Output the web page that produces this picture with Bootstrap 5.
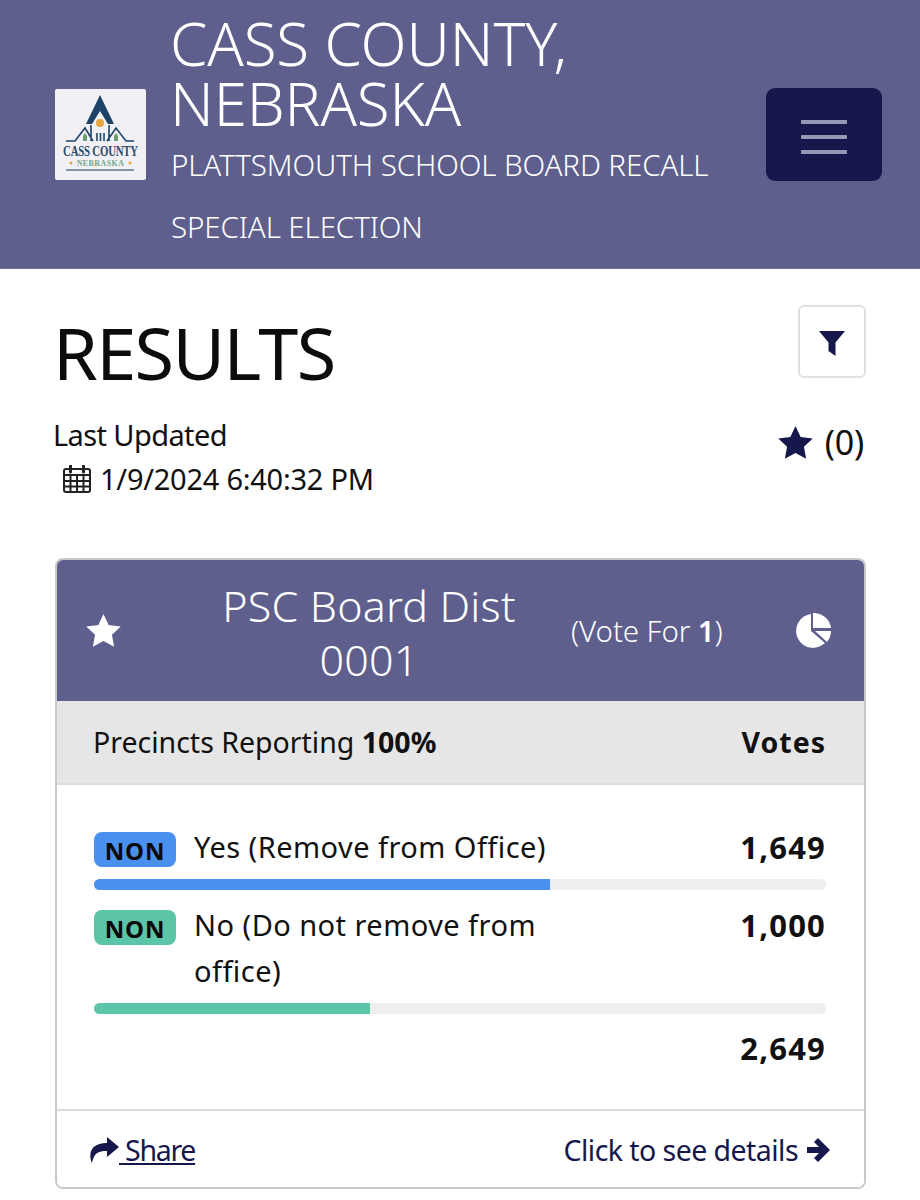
<!DOCTYPE html>
<html lang="en">
<head>
<meta charset="utf-8">
<title>Results</title>
<link href="https://cdn.jsdelivr.net/npm/bootstrap@5.3.0/dist/css/bootstrap.min.css" rel="stylesheet">
<style>
body{font-family:"Noto Sans","Open Sans",sans-serif;color:#111;background:#fff;font-size:29px;letter-spacing:-.2px}
.topbar{background:#5e5f8d;border-bottom:1px solid #77778f;height:269px;padding:0 38px 0 55px;color:#fff}
.logo-box{width:91px;height:91px;flex:none;background:#f1f1f5;border-radius:2px}
.brand-wrap{margin-left:24px;width:570px;flex:none}
.brand-title{font-size:60px;line-height:60px;font-weight:300;margin:3px 0 1px;letter-spacing:-.1px}
.brand-sub{font-size:29.5px;line-height:62px;font-weight:300;letter-spacing:-.1px;margin-left:1px}
.menu-btn{width:116px;height:93px;background:#16174a;border:0;border-radius:9px;margin-left:auto;padding:5px 0 0}
.main-wrap{padding:36px 54px 0 54px}
.page-title{font-size:72px;line-height:94px;margin:0 0 0 -1px;font-weight:400;color:#0c0c0c;letter-spacing:-1.6px}
.filter-btn{width:68px;height:73px;border:2px solid #e0e0e0;border-radius:6px;background:#fff;padding:2px 0 0}
.updated{line-height:44px;margin-top:14px}
.updated-label{letter-spacing:-.6px;margin-left:-1px}
.updated-time{margin-left:9px;column-gap:9px;letter-spacing:-.25px}
.fav-count{font-size:34px;margin-top:18px;margin-right:2px;column-gap:12px}
.result-card{border:2px solid #c9c9c9;border-radius:8px;margin-top:57px;margin-left:1px;overflow:hidden}
.race-head{background:#5e5f8d;color:#fff;height:141px;padding:0 33px 0 29px;border:0;border-radius:0}
.race-name{width:350px;font-size:43px;line-height:54px;font-weight:300;text-align:center;margin-left:73px;padding-top:4px;flex:none;letter-spacing:.2px}
.vote-for{font-size:29.5px;font-weight:300;margin-left:27px;padding-top:2px;letter-spacing:-.1px}
.vote-for b{font-weight:600}
.report-row{background:#e6e6e6;height:84px;padding:0 38px 0 36px;border-bottom:2px solid #dedede;font-size:28.5px;letter-spacing:0}
.report-row b{font-weight:700}
.votes-head{letter-spacing:1px}
.race-body{padding:47px 38px 0 37px;height:324px}
.tag-pill{width:82px;height:35px;border-radius:8px;color:#0a0a0a;font-size:24px;font-weight:700;letter-spacing:.9px;padding:0;line-height:37px;flex:none;text-align:center}
.tag-blue{background:#4a90ee}.tag-green{background:#5cc5a8}
.cand-name{margin:-8px 0 0 18px;width:385px;line-height:46px;letter-spacing:.45px}
.cand-votes{margin:-2px 0 0 auto;font-weight:700;line-height:34px;font-size:31px;letter-spacing:1.2px}
.vote-bar{height:11px;background:#eeeeee;border-radius:6px}
.bar-one{margin:9px 0 20px}
.bar-two{margin-top:9px}
.race-total{margin-top:17px;font-weight:700;line-height:34px;font-size:31px;letter-spacing:1.2px;text-align:right}
.fill-blue{background:#4a90ee}.fill-green{background:#5cc5a8}
.race-foot{background:#fff;height:78px;padding:2px 34px 0 32px;border-top:2px solid #dcdcdc;color:#16174a;font-size:28.5px;letter-spacing:-.55px}
.share-link{color:#16174a;letter-spacing:-1.3px}
</style>
</head>
<body>
<nav class="topbar d-flex align-items-center">
  <div class="logo-box d-flex align-items-center justify-content-center">
    <svg width="91" height="91" viewBox="0 0 91 91">
      <path d="M45 6 L31 35 H37 L45 22 L53 35 H59Z" fill="#1d4468"/>
      <circle cx="45" cy="34" r="4" fill="#e9a33f"/>
      <path d="M11 52H20L30 39 38 52M79 52H71L61 39 52 52M36 36V52M54 36V52" fill="none" stroke="#1d4468" stroke-width="1.600"/>
      <path d="M42 52V44M45.500 52V44M49 52V44" stroke="#1d4468" stroke-width="1.600"/>
      <path d="M28 52v-5l2-3 2 3v5zM59 52v-5l2-3 2 3v5z" fill="#6aa06f"/>
      <text transform="translate(45.500,67) scale(1,1.350)" text-anchor="middle" font-family="Liberation Serif,serif" font-size="10.800" font-weight="700" fill="#2a4b68">CASS COUNTY</text>
      <text x="45.500" y="77" text-anchor="middle" font-family="Liberation Serif,serif" font-size="8" font-weight="700" letter-spacing=".4" fill="#76a58a">NEBRASKA</text>
      <circle cx="16" cy="74" r="1.500" fill="#e9a33f"/><circle cx="75" cy="74" r="1.500" fill="#e9a33f"/>
      <rect x="11" y="80" width="68" height="2" fill="#7f96a8"/>
    </svg>
  </div>
  <div class="brand-wrap">
    <h1 class="brand-title">CASS COUNTY, NEBRASKA</h1>
    <div class="brand-sub">PLATTSMOUTH SCHOOL BOARD RECALL SPECIAL ELECTION</div>
  </div>
  <button class="menu-btn d-flex align-items-center justify-content-center" aria-label="Menu">
    <svg width="46" height="36" viewBox="0 0 46 36"><path d="M1 3h44M1 18h44M1 33h44" stroke="#9697b5" stroke-width="4" stroke-linecap="round"/></svg>
  </button>
</nav>
<main class="main-wrap">
  <div class="d-flex justify-content-between align-items-start">
    <h2 class="page-title">RESULTS</h2>
    <button class="filter-btn d-flex align-items-center justify-content-center" aria-label="Filter">
      <svg width="26" height="26" viewBox="0 0 26 26"><path d="M0 1h26L16.500 12.500V26L9.500 21V12.500Z" fill="#16174a"/></svg>
    </button>
  </div>
  <div class="d-flex justify-content-between align-items-start">
    <div class="updated">
      <div class="updated-label">Last Updated</div>
      <div class="updated-time d-flex align-items-center">
        <svg width="28" height="28" viewBox="0 0 28 28" fill="none" stroke="#222" stroke-width="2"><rect x="1" y="4" width="26" height="23" rx="2"/><path d="M1 10h26M1 16h26M1 21.500h26M7.500 10v17M14 10v17M20.500 10v17"/><path d="M7.500 1v6M20.500 1v6" stroke-width="3" stroke-linecap="round"/></svg>
        <span>1/9/2024 6:40:32 PM</span>
      </div>
    </div>
    <div class="fav-count d-flex align-items-center">
      <svg width="35" height="33" viewBox="0 0 24 23"><path d="M12 0l3.600 7.600 8.400 1.100-6.100 5.800 1.500 8.300L12 18.800l-7.400 4 1.500-8.300L0 8.700l8.400-1.100z" fill="#16174a"/></svg>
      <span>(0)</span>
    </div>
  </div>
  <section class="card result-card">
    <div class="race-head d-flex align-items-center">
      <svg width="35" height="33" viewBox="0 0 24 23"><path d="M12 0l3.600 7.600 8.400 1.100-6.100 5.800 1.500 8.300L12 18.800l-7.400 4 1.500-8.300L0 8.700l8.400-1.100z" fill="#fff"/></svg>
      <div class="race-name">PSC Board Dist 0001</div>
      <div class="vote-for">(Vote For <b>1</b>)</div>
      <svg class="ms-auto" width="36" height="36" viewBox="0 0 36 36"><path d="M16 1A17 17 0 1 0 30 30L16 18Z" fill="#fff"/><path d="M18 0A17 17 0 0 1 36 15H18Z" fill="#fff"/><path d="M20 18H36A17 17 0 0 1 32 29Z" fill="#fff"/></svg>
    </div>
    <div class="report-row d-flex align-items-center justify-content-between">
      <div>Precincts Reporting <b>100%</b></div>
      <b class="votes-head">Votes</b>
    </div>
    <div class="race-body">
      <div class="d-flex align-items-start">
        <span class="tag-pill tag-blue">NON</span>
        <span class="cand-name">Yes (Remove from Office)</span>
        <span class="cand-votes">1,649</span>
      </div>
      <div class="vote-bar bar-one progress"><div class="progress-bar fill-blue" style="width:62.3%"></div></div>
      <div class="d-flex align-items-start">
        <span class="tag-pill tag-green">NON</span>
        <span class="cand-name">No (Do not remove from office)</span>
        <span class="cand-votes">1,000</span>
      </div>
      <div class="vote-bar bar-two progress"><div class="progress-bar fill-green" style="width:37.7%"></div></div>
      <div class="race-total">2,649</div>
    </div>
    <div class="race-foot d-flex align-items-center justify-content-between">
      <a href="#" class="share-link d-flex align-items-center">
        <svg width="30" height="26" viewBox="0 0 30 26"><path d="M18 0l12 10-12 10v-6C9 14 5 16 3 26 0 20-1 6 18 6z" fill="#16174a"/></svg>
        <span>&nbsp;Share</span>
      </a>
      <div class="d-flex align-items-center gap-2">
        <span>Click to see details</span>
        <svg width="24" height="26" viewBox="0 0 24 26"><path d="M12 1l12 12-12 12-4-4 5-5H1v-6h12L8 5z" fill="#16174a"/></svg>
      </div>
    </div>
  </section>
</main>
</body>
</html>
